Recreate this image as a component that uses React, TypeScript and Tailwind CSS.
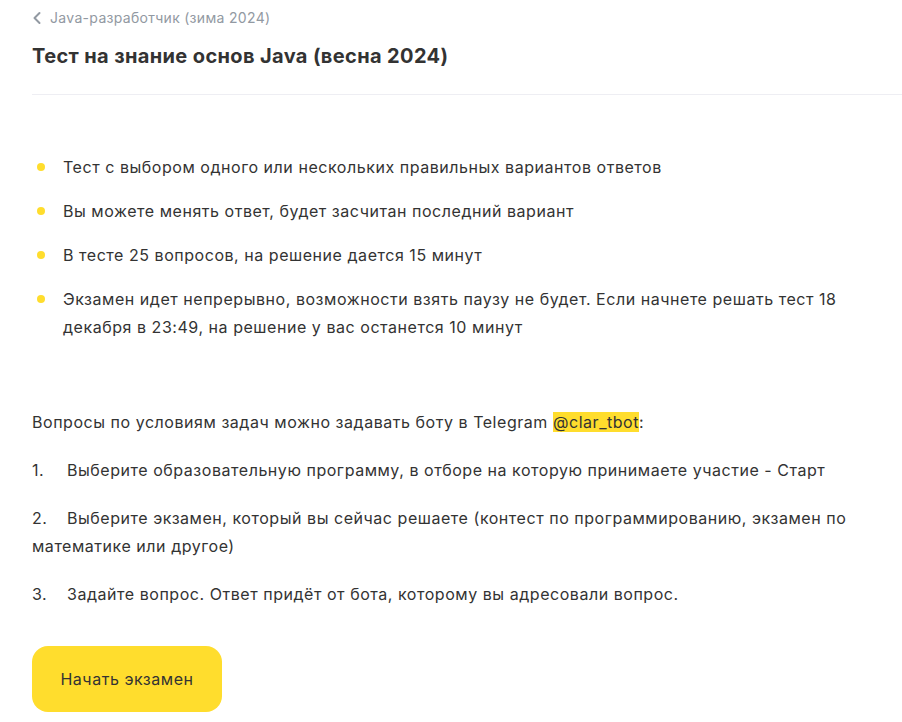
export default function App() {
    const rules = [
        "Тест с выбором одного или нескольких правильных вариантов ответов",
        "Вы можете менять ответ, будет засчитан последний вариант",
        "В тесте 25 вопросов, на решение дается 15 минут",
        "Экзамен идет непрерывно, возможности взять паузу не будет. Если начнете решать тест 18 декабря в 23:49, на решение у вас останется 10 минут",
    ];

    const steps = [
        "Выберите образовательную программу, в отборе на которую принимаете участие - Старт",
        "Выберите экзамен, который вы сейчас решаете (контест по программированию, экзамен по математике или другое)",
        "Задайте вопрос. Ответ придёт от бота, которому вы адресовали вопрос.",
    ];

    return (
        <div className="min-h-screen bg-white px-8 pb-10 text-[#333333] tracking-[0.54px] font-['Inter','Liberation_Sans',sans-serif]">
            <a href="#" className="mt-2 flex h-5 items-center gap-2 text-sm tracking-[0.32px] text-[#9299a2]">
                <svg width="10" height="14" viewBox="0 0 10 14" fill="none">
                    <path d="M7.5 2 L2.5 7 L7.5 12" stroke="#9299a2" strokeWidth="2" strokeLinecap="round" strokeLinejoin="round" />
                </svg>
                <span>Java-разработчик (зима 2024)</span>
            </a>

            <h1 className="mt-[14px] text-xl leading-7 font-bold tracking-[0.37px] text-[#333333]">Тест на знание основ Java (весна 2024)</h1>

            <div className="-mr-8 mt-6 border-t border-[#eeeef3]" />

            <ul className="mt-[58px] space-y-4">
                {rules.map((r) => (
                    <li key={r} className="flex text-base leading-7">
                        <span className="mt-[10px] ml-[5px] mr-[18px] h-2 w-2 shrink-0 rounded-full bg-[#ffdd2d]" />
                        <span>{r}</span>
                    </li>
                ))}
            </ul>

            <p className="mt-[67px] text-base leading-7">
                Вопросы по условиям задач можно задавать боту в Telegram{" "}
                <span className="bg-[#ffdd2d]">@clar_tbot</span>:
            </p>

            <div className="mt-5 space-y-5">
                {steps.map((s, i) => (
                    <p key={s} className="text-base leading-7">
                        <span className="inline-block w-[35px]">{i + 1}.</span>
                        {s}
                    </p>
                ))}
            </div>

            <button className="mt-[38px] h-[66px] w-[190px] rounded-2xl bg-[#ffdd2d] text-base text-[#333333]">
                Начать экзамен
            </button>
        </div>
    );
}
